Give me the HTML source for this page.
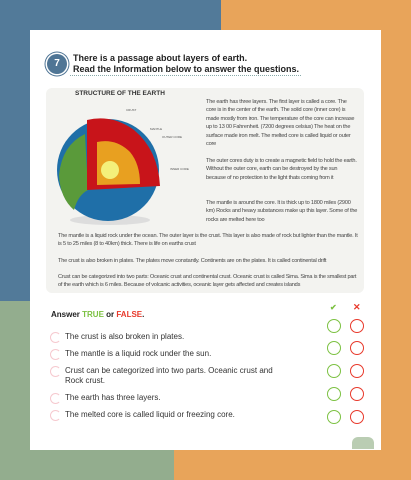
<html><head><style>
body{margin:0;width:411px;height:480px;position:relative;overflow:hidden;font-family:"Liberation Sans",sans-serif}
.a{position:absolute}
.t{position:absolute;font-size:5.6px;color:#444;line-height:8.4px;letter-spacing:-0.2px}
.q{position:absolute;left:65px;font-size:8px;color:#333}
.n{position:absolute;left:50px;width:9px;height:9px;border-radius:50%;border:1px solid #f6c9cf;border-right-color:transparent}
.c{position:absolute;width:12px;height:12px;border-radius:50%;border:1.3px solid #7cc142}
.r{border-color:#e8392b}
</style></head><body>
<div class="a" style="left:0;top:0;width:221px;height:301px;background:#527a99"></div>
<div class="a" style="left:221px;top:0;width:190px;height:480px;background:#e8a45a"></div>
<div class="a" style="left:0;top:301px;width:221px;height:179px;background:#93ad8e"></div>
<div class="a" style="left:174px;top:450px;width:237px;height:30px;background:#e8a45a"></div>
<div class="a" style="left:30px;top:30px;width:351px;height:420px;background:#fff"></div>
<div class="a" style="left:47px;top:54px;width:20px;height:20px;border-radius:50%;background:#4f7595;color:#fff;font-weight:bold;font-size:10px;text-align:center;line-height:20px;box-shadow:0 0 0 1.5px #fff,0 0 0 2.5px #4f7595">7</div>
<div class="a" style="left:73px;top:53px;font-size:9px;font-weight:bold;color:#222;line-height:10.5px">There is a passage about layers of earth.<br>Read the Information below to answer the questions.</div>
<div class="a" style="left:70px;top:75px;width:231px;border-top:1px dotted #8aa"></div>
<div class="a" style="left:46px;top:88px;width:318px;height:205px;background:#f3f3f0;border-radius:6px"></div>
<div class="a" style="left:75px;top:90px;font-size:6.5px;font-weight:bold;color:#333">STRUCTURE OF THE EARTH</div>
<svg class="a" style="left:50px;top:100px" width="160" height="130">
<ellipse cx="60" cy="120" rx="40" ry="5" fill="#ddd"/>
<circle cx="58" cy="70" r="51" fill="#1f6fa8"/>
<path d="M9 75 Q12 45 35 34 L38 90 Q28 95 24 110 Q10 98 9 75Z" fill="#5a9a3a"/>
<path d="M37 20 Q62 14 84 30 Q108 50 110 86 L37 90 Z" fill="#c8141a"/>
<path d="M47 42 Q66 38 80 52 Q90 64 90 84 L47 85 Z" fill="#e8a020"/>
<circle cx="60" cy="70" r="9" fill="#f4f07a"/>
<text x="76" y="11" font-size="3" fill="#555">CRUST</text>
<text x="100" y="30" font-size="3" fill="#555">MANTLE</text>
<text x="112" y="38" font-size="3" fill="#555">OUTER CORE</text>
<text x="120" y="70" font-size="3" fill="#555">INNER CORE</text>
</svg>
<div class="t" style="left:206px;top:98px;width:152px">The earth has three layers. The first layer is called a core. The core is in the center of the earth. The solid core (inner core) is made mostly from iron. The temperature of the core can increase up to 13 00 Fahrenheit. (7200 degrees celsius) The heat on the surface made iron melt. The melted core is called liquid or outer core</div>
<div class="t" style="left:206px;top:157px;width:152px">The outer cores duty is to create a magnetic field to hold the earth. Without the outer core, earth can be destroyed by the sun because of no protection to the light thats coming from it</div>
<div class="t" style="left:206px;top:199px;width:152px">The mantle is around the core. It is thick up to 1800 miles (2900 km) Rocks and heavy substances make up this layer. Some of the rocks are melted here too</div>
<div class="t" style="left:58px;top:232px;width:300px">The mantle is a liquid rock under the ocean. The outer layer is the crust. This layer is also made of rock but lighter than the mantle. It is 5 to 25 miles (8 to 40km) thick. There is life on earths crust</div>
<div class="t" style="left:58px;top:257px;width:300px">The crust is also broken in plates. The plates move constantly. Continents are on the plates. It is called continental drift</div>
<div class="t" style="left:58px;top:273px;width:300px">Crust can be categorized into two parts: Oceanic crust and continental crust. Oceanic crust is called Sima. Sima is the smallest part of the earth which is 6 miles. Because of volcanic activities, oceanic layer gets affected and creates islands</div>
<div class="a" style="left:51px;top:310px;font-size:8px;font-weight:bold;color:#222">Answer <span style="color:#7cc142">TRUE</span> or <span style="color:#e8392b">FALSE</span>.</div>
<div class="a" style="left:330px;top:303px;font-size:8px;color:#7cc142;font-weight:bold">✔</div>
<div class="a" style="left:353px;top:302px;font-size:9px;color:#e8392b;font-weight:bold">✕</div>
<div class="c" style="left:327px;top:319px"></div><div class="c r" style="left:350px;top:319px"></div>
<div class="c" style="left:327px;top:341px"></div><div class="c r" style="left:350px;top:341px"></div>
<div class="c" style="left:327px;top:364px"></div><div class="c r" style="left:350px;top:364px"></div>
<div class="c" style="left:327px;top:387px"></div><div class="c r" style="left:350px;top:387px"></div>
<div class="c" style="left:327px;top:410px"></div><div class="c r" style="left:350px;top:410px"></div>
<div class="n" style="top:332px"></div><div class="q" style="top:332px">The crust is also broken in plates.</div>
<div class="n" style="top:349px"></div><div class="q" style="top:349px">The mantle is a liquid rock under the sun.</div>
<div class="n" style="top:366px"></div><div class="q" style="top:366px;line-height:10px">Crust can be categorized into two parts. Oceanic crust and<br>Rock crust.</div>
<div class="n" style="top:393px"></div><div class="q" style="top:393px">The earth has three layers.</div>
<div class="n" style="top:410px"></div><div class="q" style="top:410px">The melted core is called liquid or freezing core.</div>
<div class="a" style="left:352px;top:437px;width:22px;height:12px;background:#a9c0a0;border-radius:6px 6px 0 0;opacity:.8"></div>
</body></html>
